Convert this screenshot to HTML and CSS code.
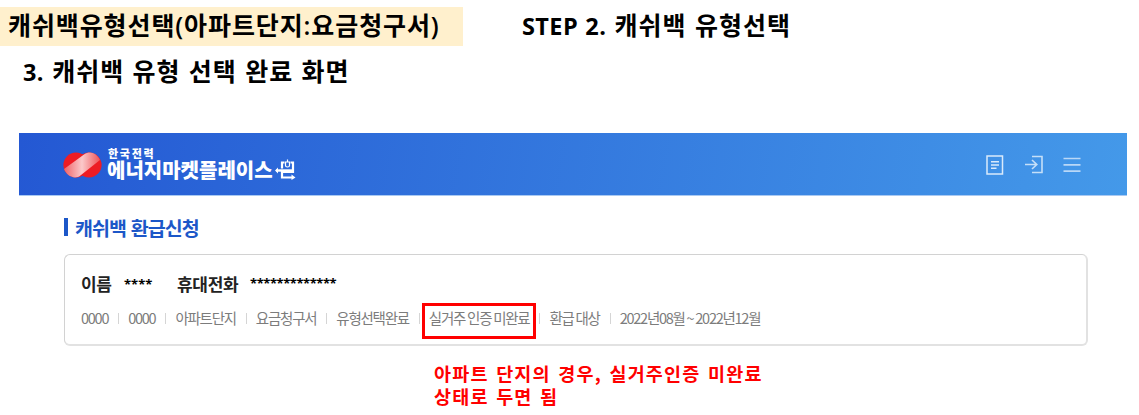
FILE: index.html
```html
<!DOCTYPE html>
<html lang="ko">
<head>
    <meta charset="UTF-8">
    <meta name="viewport" content="width=device-width, initial-scale=1.0">
    <title>캐쉬백 유형선택</title>
    <link rel="stylesheet" href="styles.css">
</head>
<body>

<div class="guide-top">
    <h1 class="guide-title">캐쉬백유형선택(아파트단지:요금청구서)</h1>
    <p class="guide-step"><span class="latin">STEP 2.</span> 캐쉬백 유형선택</p>
</div>
<h2 class="guide-sub"><span class="latin">3.</span> 캐쉬백 유형 선택 완료 화면</h2>

<header class="site-header">
    <div class="logo">
        <svg class="logo-mark" width="39" height="26" viewBox="0 0 39 26">
            <defs>
                <linearGradient id="band" x1="0" y1="0" x2="1" y2="0">
                    <stop offset="0" stop-color="#ef6368"/>
                    <stop offset="0.5" stop-color="#fbc9ca"/>
                    <stop offset="1" stop-color="#ef5459"/>
                </linearGradient>
            </defs>
            <ellipse cx="13" cy="13" rx="12.6" ry="12.4" fill="#ed1c24"/>
            <ellipse cx="26" cy="13" rx="12.6" ry="12.4" fill="#ed1c24"/>
            <path d="M1 17 L21 2.5 C23 1 25 .6 27 .6 C31 .8 35 3.5 37 8 L18 23 C16 25 14 25.4 12 25.4 C7 25 3 22 1 17Z" fill="url(#band)"/>
        </svg>
        <div class="logo-text">
            <span class="logo-small">한국전력</span>
            <span class="logo-name">에너지마켓플레이스</span>
        </div>
        <svg class="logo-plug" width="21" height="21" viewBox="0 0 21 21" fill="none" stroke="#fff">
            <path d="M9.500 3.500H7V9.500M15.500 3.500H18V13H7V18.500H17" stroke-width="2.200"/>
            <path d="M1 11.500H18" stroke-width="2.400"/>
            <path d="M12.500 0.500V3M10.500 3H14.500V6.500Q14.500 8 12.500 8Q10.500 8 10.500 6.500Z" stroke-width="1.200"/>
            <path d="M3 8.500V14.500L0 11.500ZM16.500 15.500L20.500 18.500L16.500 21Z" fill="#fff" stroke="none"/>
        </svg>
    </div>
    <nav class="header-menu">
        <svg width="18" height="20" viewBox="0 0 18 20" fill="none" stroke="#d9eafb" stroke-width="1.500">
            <rect x="1" y="1" width="15.500" height="18"/>
            <path d="M5 6.700H13M5 10H13M5 13.300H10.500"/>
        </svg>
        <svg width="18" height="20" viewBox="0 0 18 20" fill="none" stroke="#c5dff8" stroke-width="1.600">
            <path d="M7 1.500H17V17.500H7"/>
            <path d="M0 9.500H11.500M7 5L11.800 9.500L7 14"/>
        </svg>
        <svg width="18" height="20" viewBox="0 0 18 20" fill="none" stroke="#b9d8f7" stroke-width="1.700">
            <path d="M0.500 3.500H17.500M0.500 9.800H17.500M0.500 16.200H17.500"/>
        </svg>
    </nav>
</header>

<main class="content">
    <h3 class="section-title"><span>캐쉬백 환급신청</span></h3>
    <section class="card">
        <div class="person">
            <strong class="name-label">이름</strong>
            <span class="mask name-mask">****</span>
            <strong class="phone-label">휴대전화</strong>
            <span class="mask phone-mask">*************</span>
        </div>
        <ul class="info">
            <li>0000</li>
            <li>0000</li>
            <li>아파트단지</li>
            <li>요금청구서</li>
            <li>유형선택완료</li>
            <li class="marked">실거주 인증 미완료</li>
            <li>환급 대상</li>
            <li>2022년08월 ~ 2022년12월</li>
        </ul>
    </section>
    <p class="note">아파트 단지의 경우, 실거주인증 미완료<br>상태로 두면 됨</p>
</main>

</body>
</html>
```

FILE: styles.css
```css
/* Reset */
*, *::before, *::after {
    margin: 0;
    padding: 0;
    box-sizing: border-box;
}
body {
    width: 1139px;
    height: 415px;
    overflow: hidden;
    background: #fff;
    color: #000;
    font-family: "Noto Sans CJK KR", sans-serif;
    white-space: nowrap;
}
svg {
    display: block;
    flex: none;
}
/* Guide titles */
.guide-top {
    display: flex;
    padding-top: 7px;
}
.guide-title, .guide-step, .guide-sub {
    height: 39px;
    font-family: "Open Sans", "Noto Sans CJK KR", sans-serif;
    font-size: 25px;
    font-weight: 600;
    line-height: 36px;
    letter-spacing: 1px;
}
.guide-title {
    width: 463px;
    padding-left: 8px;
    background: #fff0cd;
    letter-spacing: 0.9px;
}
.guide-step {
    margin-left: 59px;
    word-spacing: 0.8px;
}
.guide-sub {
    margin-top: 7px;
    padding-left: 23px;
    word-spacing: 0.8px;
}
.latin {
    font-size: 23.5px;
    font-weight: 700;
    letter-spacing: 0.4px;
}
/* Site header */
.site-header {
    display: flex;
    justify-content: space-between;
    width: 1108px;
    height: 63px;
    margin: 41px 0 0 19px;
    padding: 0 46px 0 44px;
    background: linear-gradient(100deg, #2458d3, #4499e9);
    border-bottom: 1px solid #a9c9f2;
}
.logo {
    display: flex;
    padding-top: 15px;
    color: #fff;
}
.logo-mark {
    margin-top: 4px;
}
.logo-text {
    display: flex;
    flex-direction: column;
    width: 167px;
    margin-left: 5px;
}
.logo-small {
    font-size: 11px;
    font-weight: 800;
    line-height: 11px;
    letter-spacing: 1.7px;
    padding-left: 1px;
}
.logo-name {
    font-size: 20px;
    font-weight: 900;
    line-height: 22px;
    letter-spacing: 0;
}
.logo-plug {
    margin: 11px 0 0 1px;
}
.header-menu {
    display: flex;
    gap: 20.5px;
    padding-top: 22px;
}
/* Content */
.content {
    padding: 16px 0 0 64px;
}
.section-title {
    display: flex;
    align-items: center;
    gap: 7px;
    height: 30px;
    color: #1c57c8;
    font-size: 19.5px;
    font-weight: 600;
    letter-spacing: -0.9px;
}
.section-title::before {
    content: '';
    width: 4px;
    height: 18px;
    background: #1c57c8;
}
.card {
    width: 1024px;
    height: 92px;
    margin-top: 12px;
    padding: 15px 0 0 16px;
    border: 1px solid #d2d2d2;
    border-right: 2px solid #e2e2e2;
    border-bottom: 2px solid #e2e2e2;
    border-radius: 6px;
}
.person {
    display: flex;
    height: 28px;
    line-height: 28px;
    color: #222;
    font-size: 17px;
}
.person strong {
    font-weight: 600;
    letter-spacing: -0.3px;
}
.name-label {
    width: 43px;
}
.mask {
    color: #000;
    font-family: "Open Sans", sans-serif;
    font-size: 13px;
    font-weight: 700;
}
.name-mask {
    width: 53px;
}
.phone-label {
    width: 73px;
}
.phone-mask {
    line-height: 26px;
    letter-spacing: -0.45px;
}
.info {
    display: flex;
    height: 36px;
    margin-top: 2px;
    line-height: 32px;
    list-style: none;
    color: #7c7c7c;
    font-size: 14.5px;
    font-weight: 400;
    letter-spacing: -1.25px;
    word-spacing: -0.9px;
}
.info li {
    display: flex;
    align-items: center;
    position: relative;
    white-space: pre;
}
.info li + li::before {
    content: '';
    width: 1px;
    height: 11px;
    margin: 0 9px 0 10px;
    background: #d5d5d5;
}
/* Red frame round the status */
.info .marked::after {
    content: '';
    position: absolute;
    left: 13px;
    top: 3px;
    width: 114px;
    height: 36px;
    border: 3px solid #f00;
}
.note {
    height: 50px;
    margin: 16px 0 0 370px;
    color: #f00;
    font-size: 18.5px;
    font-weight: 700;
    line-height: 23px;
    letter-spacing: 1.2px;
    word-spacing: 1.1px;
}
```
